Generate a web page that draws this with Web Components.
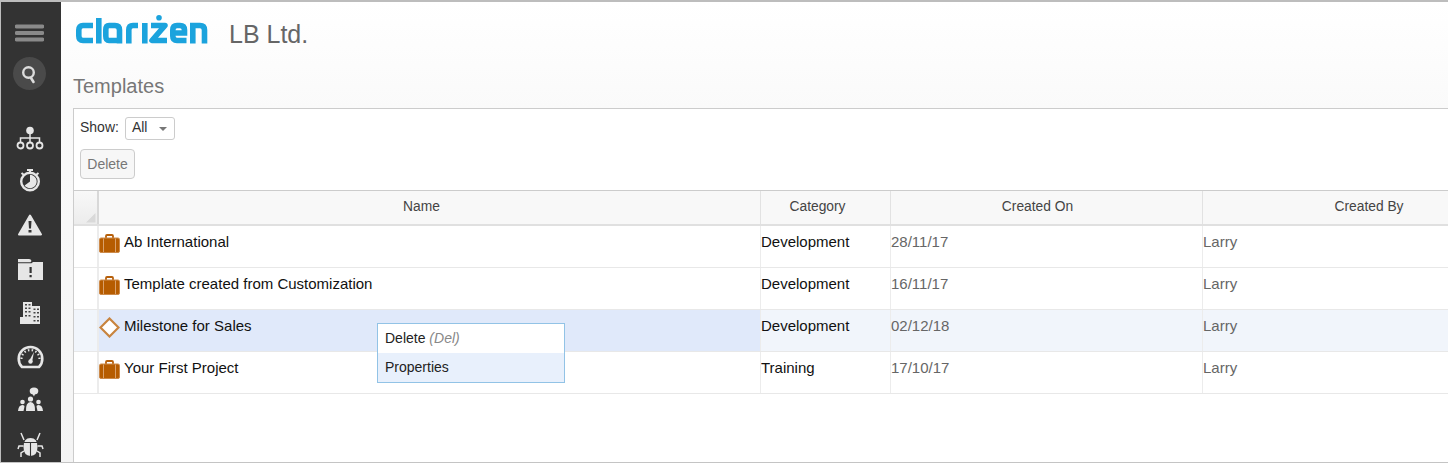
<!DOCTYPE html>
<html>
<head>
<meta charset="utf-8">
<title>Templates</title>
<style>
  html, body { margin: 0; padding: 0; background: #fff; }
  body { font-family: "Liberation Sans", Arial, sans-serif; overflow: hidden; }
</style>
</head>
<body>
<app-shell>
  <side-rail></side-rail>
  <main-area>
    <top-bar company="LB Ltd." heading="Templates"></top-bar>
    <templates-panel>
      <grid-row name="Ab International" category="Development" created="28/11/17" by="Larry" kind="project"></grid-row>
      <grid-row name="Template created from Customization" category="Development" created="16/11/17" by="Larry" kind="project"></grid-row>
      <grid-row name="Milestone for Sales" category="Development" created="02/12/18" by="Larry" kind="milestone" selected></grid-row>
      <grid-row name="Your First Project" category="Training" created="17/10/17" by="Larry" kind="project"></grid-row>
      <context-menu></context-menu>
    </templates-panel>
  </main-area>
</app-shell>
<script>
const ICONS = {
  org: `<circle cx="15" cy="13.5" r="3.8" fill="currentColor"/>
    <path d="M15 15V25M5.5 25V21H24.5V25" fill="none" stroke="currentColor" stroke-width="1.5"/>
    <g fill="none" stroke="currentColor" stroke-width="1.8"><circle cx="5.5" cy="28.5" r="3"/><circle cx="15" cy="28.5" r="3"/><circle cx="24.5" cy="28.5" r="3"/></g>`,
  timer: `<path d="M12 9h6M15 9v3M6.500 12l2.500 2M23.500 12l-2.500 2" fill="none" stroke="currentColor" stroke-width="2"/>
    <circle cx="15" cy="20.500" r="8.800" fill="none" stroke="currentColor" stroke-width="2.400"/>
    <path d="M15 13.800A6.700 6.700 0 1 1 9.600 24.500L15 20.500Z" fill="currentColor"/>`,
  warning: `<path d="M15 10.500L26 29.500H4Z" fill="currentColor" stroke="currentColor" stroke-width="2" stroke-linejoin="round"/>
    <path d="M13.500 16h3l-.5 7.500h-2ZM13.500 25h3v2.500h-3Z" fill="#333"/>`,
  folder: `<path d="M3 10H14Q16 10 16.500 12L15.500 13.200H3Z" fill="currentColor"/>
    <path d="M3 14.200H16.500L18 13H28V31H3Z" fill="currentColor"/>
    <path d="M14.500 18h2.200v6h-2.200ZM14.500 26h2.200v2.200h-2.200Z" fill="#333"/>`,
  building: `<path d="M8 9H17V13H25V31H5V24H8Z" fill="currentColor"/>
    <path d="M10 11h2v1.500h-2ZM13.500 11h2v1.500h-2ZM10 14.500h2v1.500h-2ZM13.500 14.500h2v1.500h-2ZM10 18h2v1.500h-2ZM13.500 18h2v1.500h-2ZM18.500 15.500h2v1.500h-2ZM22 15.500h2v1.500h-2ZM18.500 19h2v1.500h-2ZM22 19h2v1.500h-2ZM10 22h2v1.500h-2ZM13.500 22h2v1.500h-2ZM18.500 23h2v1.500h-2ZM22 23h2v1.500h-2ZM18.500 27h2v1.500h-2ZM22 27h2v1.500h-2Z" fill="#444"/>`,
  gauge: `<path d="M7 30A11.800 11.800 0 1 1 24 30Z" fill="none" stroke="currentColor" stroke-width="2.600" stroke-linejoin="round"/>
    <path d="M6.500 22A9 9 0 0 1 24.500 22" fill="none" stroke="currentColor" stroke-width="2.200" stroke-dasharray="1.500 2.300"/>
    <path d="M14 24L19 15L17 25Z" fill="currentColor"/><circle cx="15.500" cy="24.500" r="2.200" fill="currentColor"/>`,
  people: `<ellipse cx="19" cy="10" rx="4.300" ry="3.600" fill="currentColor"/><path d="M17.500 13l1.500 2.500 1-2.500Z" fill="currentColor"/>
    <circle cx="15.500" cy="18" r="2.600" fill="currentColor"/><path d="M11 30Q10.500 21.500 15.500 21Q20.500 21.500 20 30Z" fill="currentColor"/>
    <circle cx="7.500" cy="21" r="2.300" fill="currentColor"/><path d="M3 30Q3.500 24 7.500 24Q9.800 24 9.500 25.500L8.500 30Z" fill="currentColor"/>
    <circle cx="23.500" cy="21" r="2.300" fill="currentColor"/><path d="M28 30Q27.500 24 23.500 24Q21.200 24 21.500 25.500L22.500 30Z" fill="currentColor"/>`,
  bug: `<path d="M15.500 13Q22.500 13 22.500 22Q22.500 30.500 15.500 31Q8.500 30.500 8.500 22Q8.500 13 15.500 13Z" fill="currentColor"/>
    <path d="M15.500 18V31M9 17.500H22" stroke="#333" stroke-width="1.100" fill="none"/>
    <path d="M9 15L6 8M22 15L25 8M8.500 21H4L3 24M22.500 21H27L28 24M9 26L6 28V32M22 26L25 28V32" fill="none" stroke="currentColor" stroke-width="1.500"/>`
};

class AppShell extends HTMLElement {
  constructor() {
    super();
    this.attachShadow({ mode: 'open' });
    this.shadowRoot.innerHTML = `
      <style>
        :host {
          display: flex;
          width: 1448px;
          height: 463px;
          box-sizing: border-box;
          border-top: 2px solid #bdbdbd;
          border-bottom: 1px solid #c4c4c4;
          border-left: 1px solid #bdbdbd;
          overflow: hidden;
        }
      </style>
      <slot></slot>
    `;
  }
}

class SideRail extends HTMLElement {
  constructor() {
    super();
    this.attachShadow({ mode: 'open' });
    const names = ['org', 'timer', 'warning', 'folder', 'building', 'gauge', 'people', 'bug'];
    this.shadowRoot.innerHTML = `
      <style>
        :host {
          display: block;
          flex: none;
          width: 60px;
          background: #333;
          color: #e6e6e6;
          box-sizing: border-box;
          padding: 22px 0 0 14px;
        }
        .burger { display: block; width: 29px; height: 18px; }
        .search {
          width: 33px;
          height: 33px;
          margin: 15px 0 0 -2px;
          border-radius: 50%;
          background: #4a4a4a;
          display: flex;
          align-items: center;
          justify-content: center;
        }
        .list { margin-top: 27px; }
        .list svg { display: block; width: 30px; height: 44px; }
      </style>
      <svg class="burger" viewBox="0 0 29 18"><path d="M1.500 2.500H27.500M1.500 9H27.500M1.500 15.500H27.500" stroke="#8a8a8a" stroke-width="3.800" stroke-linecap="round"/></svg>
      <div class="search">
        <svg width="20" height="20" viewBox="0 0 20 20"><circle cx="8.500" cy="8.500" r="5.300" fill="none" stroke="#dcdcdc" stroke-width="2.400"/><path d="M11 14L13.500 18" stroke="#dcdcdc" stroke-width="2.600" stroke-linecap="round"/></svg>
      </div>
      <div class="list">
        ${names.map(n => `<svg viewBox="0 0 30 44">${ICONS[n]}</svg>`).join('')}
      </div>
    `;
  }
}

class MainArea extends HTMLElement {
  constructor() {
    super();
    this.attachShadow({ mode: 'open' });
    this.shadowRoot.innerHTML = `
      <style>
        :host {
          display: flex;
          flex-direction: column;
          flex: 1;
          min-width: 0;
          padding-left: 12px;
          background: linear-gradient(to bottom, #fff 0, #fafafa 106px, #f4f4f4 460px);
        }
      </style>
      <slot></slot>
    `;
  }
}

class TopBar extends HTMLElement {
  constructor() {
    super();
    this.attachShadow({ mode: 'open' });
  }

  connectedCallback() {
    this.shadowRoot.innerHTML = `
      <style>
        :host { display: block; height: 106px; color: #666; }
        .brand { display: flex; align-items: flex-start; padding: 13px 0 0 3px; height: 43px; }
        .logo { display: block; width: 132px; height: 29px; flex: none; }
        .company { font-size: 25px; line-height: 28px; margin: 5px 0 0 21px; }
        h1 { margin: 16px 0 0; font-weight: normal; font-size: 20px; line-height: 24px; color: #777; }
      </style>
      <div class="brand">
        <svg class="logo" viewBox="0 0 132 29" fill="none" stroke="#1ba3dd" stroke-width="5.600">
          <path d="M17 10.500H7Q2.800 10.500 2.800 15V21Q2.800 25.500 7 25.500H17"/>
          <path d="M22.800 3V28.500"/>
          <path d="M43.500 28.500V15Q43.500 10.500 39 10.500H33Q29.800 10.500 29.800 15V21Q29.800 25.500 33 25.500H43.500"/>
          <path d="M52.800 28.500V15Q52.800 10.500 57 10.500H62"/>
          <path d="M68.800 8V28.500"/>
          <path d="M75 10.500H89L76 25.500H91" stroke-linejoin="round"/>
          <circle cx="83" cy="2.800" r="2.800" fill="#1ba3dd" stroke="none"/>
          <path d="M110.500 25.500H101Q96.800 25.500 96.800 21V15Q96.800 10.500 101 10.500H104Q108.500 10.500 108.500 15V18H97"/>
          <path d="M116.800 28.500V10.500H124Q128.500 10.500 128.500 15V28.500"/>
        </svg>
        <span class="company">${this.getAttribute('company')}</span>
      </div>
      <h1>${this.getAttribute('heading')}</h1>
    `;
  }
}

const COLUMNS = '25px 662px 130px 312px 1fr';

class TemplatesPanel extends HTMLElement {
  constructor() {
    super();
    this.attachShadow({ mode: 'open' });
    this.shadowRoot.innerHTML = `
      <style>
        :host {
          display: block;
          flex: 1;
          position: relative;
          background: #fff;
          border-top: 1px solid #ccc;
          border-left: 1px solid #ccc;
        }
        .toolbar { padding: 8px 0 11px 6px; }
        .show { display: flex; align-items: flex-start; gap: 6px; font-size: 14px; line-height: 21px; color: #333; }
        .select {
          width: 50px;
          height: 23px;
          box-sizing: border-box;
          display: flex;
          align-items: center;
          padding: 0 0 2px 6px;
          border: 1px solid #ccc;
          border-radius: 3px;
          background: #fff;
          font-size: 14px;
          color: #333;
        }
        .caret {
          margin: 2px 0 0 12px;
          border: 4.500px solid transparent;
          border-top-color: #777;
          border-bottom: 0;
        }
        button {
          display: block;
          margin-top: 9px;
          width: 55px;
          height: 30px;
          padding: 0;
          border: 1px solid #ccc;
          border-radius: 4px;
          background: #f7f7f7;
          color: #777;
          font: 14px "Liberation Sans", Arial, sans-serif;
        }
        .head {
          display: grid;
          grid-template-columns: ${COLUMNS};
          height: 36px;
          box-sizing: border-box;
          border-top: 1px solid #ccc;
          border-bottom: 2px solid #e0e0e0;
          background: #f8f8f8;
          font-size: 13.800px;
          color: #444;
        }
        .head div {
          display: flex;
          align-items: center;
          justify-content: center;
          border-right: 1px solid #e2e2e2;
          padding: 0 16px 2px 0;
        }
        .head div.on { padding-right: 18px; }
        .head div.by { border-right: 0; padding: 0 0 2px 87px; }
        .head div.corner {
          position: relative;
          padding: 0;
          border-right: 2px solid #d8d8d8;
          background: linear-gradient(to bottom, #f8f8f8, #ececec);
        }
        .corner svg { position: absolute; right: 1px; bottom: 1px; }
      </style>
      <div class="toolbar">
        <div class="show"><span>Show:</span><span class="select">All<span class="caret"></span></span></div>
        <button>Delete</button>
      </div>
      <div class="head">
        <div class="corner"><svg width="11" height="11" viewBox="0 0 11 11"><path d="M1 10.500L10.500 1V10.500Z" fill="#d9d9d9"/></svg></div>
        <div>Name</div>
        <div>Category</div>
        <div class="on">Created On</div>
        <div class="by">Created By</div>
      </div>
      <slot></slot>
    `;
  }
}

class GridRow extends HTMLElement {
  constructor() {
    super();
    this.attachShadow({ mode: 'open' });
  }

  connectedCallback() {
    const project = `<svg class="icon" width="21" height="19" viewBox="0 0 21 19">
      <path d="M7 4V2Q7 1 8 1H13Q14 1 14 2V4" fill="none" stroke="#b65f0a" stroke-width="1.800"/>
      <rect x="0.500" y="4" width="20" height="14.500" rx="1.500" fill="#b65c00" stroke="#cc8a4a"/>
      <path d="M4.500 4.500V18M16.500 4.500V18" stroke="#d9a06a"/>
    </svg>`;
    const milestone = `<svg class="icon" width="21" height="21" viewBox="0 0 21 21">
      <path d="M10.500 1.500L19.500 10.500L10.500 19.500L1.500 10.500Z" fill="#fff" stroke="#c8843f" stroke-width="2.200"/>
    </svg>`;
    const kind = this.getAttribute('kind');
    this.shadowRoot.innerHTML = `
      <style>
        :host {
          display: grid;
          grid-template-columns: ${COLUMNS};
          height: 42px;
          box-sizing: border-box;
          border-bottom: 1px solid #e8e8e8;
          font-size: 15px;
          line-height: 17px;
          color: #111;
        }
        :host([selected]) { background: #f1f5fb; }
        :host([selected]) .name { background: #e0e9fa; }
        div { border-right: 1px solid #ececec; padding-top: 7px; box-sizing: border-box; white-space: nowrap; }
        .sel { border-right: 2px solid #ececec; }
        .name { display: flex; align-items: flex-start; position: relative; padding-left: 25px; }
        .icon { position: absolute; left: 0; top: ${kind === 'project' ? 8 : 7}px; }
        .muted { color: #666; }
        .by { border-right: 0; }
      </style>
      <div class="sel"></div>
      <div class="name">${kind === 'project' ? project : milestone}${this.getAttribute('name')}</div>
      <div>${this.getAttribute('category')}</div>
      <div class="muted">${this.getAttribute('created')}</div>
      <div class="muted by">${this.getAttribute('by')}</div>
    `;
  }
}

class ContextMenu extends HTMLElement {
  constructor() {
    super();
    this.attachShadow({ mode: 'open' });
    this.shadowRoot.innerHTML = `
      <style>
        :host {
          position: absolute;
          left: 303px;
          top: 214px;
          width: 188px;
          height: 60px;
          box-sizing: border-box;
          border: 1px solid #92c3e6;
          background: #fff;
          font-size: 14px;
          color: #222;
        }
        div { height: 29px; line-height: 28px; padding-left: 7px; }
        div + div { background: #e8f0fc; }
        em { color: #888; }
      </style>
      <div>Delete <em>(Del)</em></div>
      <div>Properties</div>
    `;
  }
}

customElements.define('app-shell', AppShell);
customElements.define('side-rail', SideRail);
customElements.define('main-area', MainArea);
customElements.define('top-bar', TopBar);
customElements.define('templates-panel', TemplatesPanel);
customElements.define('grid-row', GridRow);
customElements.define('context-menu', ContextMenu);
</script>
</body>
</html>
